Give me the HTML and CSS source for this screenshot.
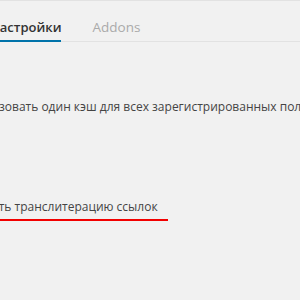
FILE: index.html
```html
<!DOCTYPE html>
<html lang="ru">
<head>
	<meta charset="UTF-8">
	<title>Настройки</title>
	<link rel="stylesheet" href="styles.css">
</head>
<body>
<div class="tabs">
	<a class="tab active">Настройки</a>
	<a class="tab">Addons</a>
</div>
<div class="options">
	<p class="opt cache">Использовать один кэш для всех зарегистрированных пользователей</p>
	<p class="opt marked">Включить транслитерацию ссылок</p>
</div>
</body>
</html>
```
FILE: styles.css
```css
html,body{
	padding: 0;
	margin: 0;
	background-color: #f1f1f1;
	font-family: "Open Sans", "Noto Sans", sans-serif;
	color: #444;
	overflow: hidden;
}
.tabs{
	display: flex;
	gap: 31px;
	height: 40px;
	margin-left: -10px;
	border-top: 1px solid #e2e2e2;
	border-bottom: 1px solid #e2e2e2;
}
.tab{
	display: flex;
	align-items: flex-end;
	padding-bottom: 4px;
	font-size: 13.5px;
	color: #aaa;
	border-bottom: 2px solid transparent;
	margin-bottom: -1px;
}
.tab.active{
	font-size: 13px;
	font-weight: 600;
	color: #333;
	border-bottom-color: #0073aa;
}
.options{
	padding-top: 55px;
}
.opt{
	margin: 0;
	font-size: 12px;
	white-space: nowrap;
	line-height: 20px;
}
.cache{
	margin-left: -44.5px;
}
.marked{
	display: inline-block;
	margin-top: 80px;
	margin-left: -47px;
	padding-right: 10px;
	padding-bottom: 2px;
	border-bottom: 2px solid #f20000;
}
```
